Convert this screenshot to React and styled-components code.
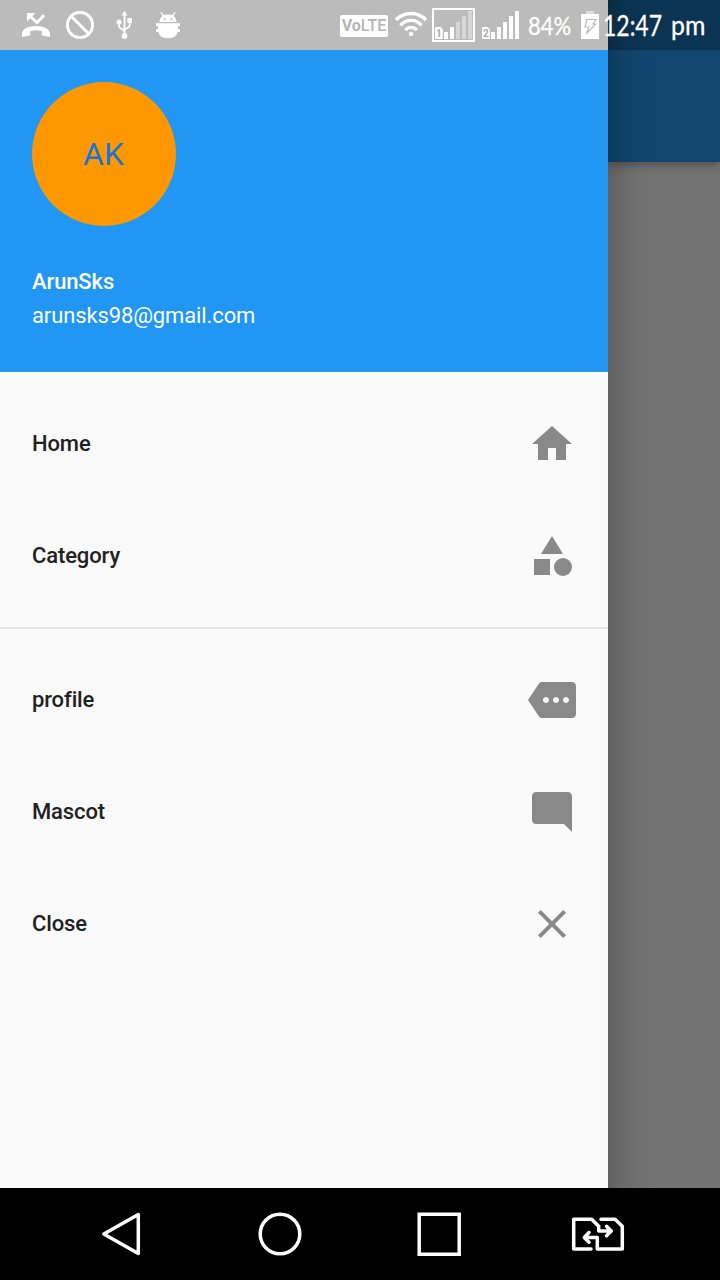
import React from 'react';
import styled, { createGlobalStyle } from 'styled-components';
import { MdHome, MdCategory, MdMore, MdModeComment, MdClose } from 'react-icons/md';

const GlobalStyle = createGlobalStyle`
  * { box-sizing: border-box; }
  body { margin: 0; font-family: Roboto, "Liberation Sans", sans-serif; }
`;

const Screen = styled.div`
  position: relative;
  width: 720px;
  height: 1280px;
  display: flex;
  flex-direction: column;
  overflow: hidden;
`;

const Main = styled.main`
  flex: 1;
  display: flex;
  min-height: 0;
`;

const Drawer = styled.aside`
  width: 608px;
  background: #fafafa;
  padding-top: 50px;
`;

const DrawerHeader = styled.header`
  height: 322px;
  padding: 32px;
  background: #2196f3;
  color: #fff;
`;

const Avatar = styled.div`
  width: 144px;
  height: 144px;
  padding-right: 1px;
  border-radius: 50%;
  background: #ff9800;
  color: #1976d2;
  font-size: 32px;
  display: flex;
  align-items: center;
  justify-content: center;
`;

const AccountText = styled.div`
  margin-top: ${(p) => p.$top}px;
  font-size: 22px;
  line-height: 34px;
  letter-spacing: -0.12px;
  font-weight: ${(p) => (p.$strong ? 500 : 400)};
`;

const Menu = styled.nav`
  padding-top: 16px;
`;

const MenuItem = styled.a`
  height: 112px;
  padding: 0 32px;
  display: flex;
  align-items: center;
  justify-content: space-between;
  color: #212121;
  font-size: 22px;
  letter-spacing: -0.12px;
  font-weight: 500;

  svg {
    width: 48px;
    height: 48px;
    color: #898989;
  }
`;

const MenuLabel = styled.span`
  padding-bottom: 2px;
`;

const Divider = styled.hr`
  height: 2px;
  margin: 15px 0;
  border: 0;
  background: #e5e5e5;
`;

const Page = styled.section`
  flex: 1;
  position: relative;
  display: flex;
  flex-direction: column;
  overflow: hidden;
  background: #737373;
`;

const PageStatus = styled.div`
  height: 50px;
  background: #0b3453;
`;

const PageAppBar = styled.div`
  height: 112px;
  background: #10466f;
  box-shadow: 0 2px 10px rgba(0, 0, 0, 0.35);
  clip-path: inset(0 0 -20px 0);
`;

const DrawerShadow = styled.div`
  position: absolute;
  inset: 0 auto 0 0;
  width: 50px;
  background: linear-gradient(to right, rgba(0, 0, 0, 0.17), rgba(0, 0, 0, 0.065) 32%, rgba(0, 0, 0, 0.02) 65%, transparent);
`;

const StatusBar = styled.div`
  position: absolute;
  inset: 0 0 auto 0;
  height: 50px;
  padding: 0 0 0 22px;
  display: flex;
  align-items: center;
  color: #fff;
  background: linear-gradient(to right, #bbb 608px, transparent 608px);

  svg { flex: none; display: block; }
`;

const StatusGroup = styled.div`
  display: flex;
  align-items: center;
  width: ${(p) => p.$width}px;
  gap: ${(p) => p.$gap}px;
`;

const VolteBadge = styled.span`
  width: 48px;
  height: 22px;
  margin: 2px 7px 0 0;
  border-radius: 2px;
  background: #fff;
  color: #b5b5b5;
  font-size: 16px;
  font-weight: 500;
  line-height: 22px;
  text-align: center;
  b { font-weight: 700; }
`;

const StatusText = styled.span`
  font-family: Lato, Roboto, sans-serif;
  font-size: ${(p) => p.$size}px;
  line-height: 50px;
  width: ${(p) => p.$width}px;
  flex: none;
  white-space: nowrap;
  -webkit-text-stroke: 0.3px currentColor;
  transform-origin: left center;
  transform: scaleX(${(p) => p.$scale});
`;

const Clock = styled.div`
  display: flex;
  padding-left: 4px;
`;

const NavBar = styled.footer`
  height: 92px;
  background: #000;
  display: flex;
  align-items: center;
  padding-left: 100px;
  svg { display: block; flex: none; }
`;

const NavButton = styled.span`
  width: ${(p) => p.$width}px;
`;

const MissedCall = () => (
  <svg width="28" height="50" viewBox="22 0 28 50" fill="currentColor">
    <path d="M27 13h8.500L27 21.500z" />
    <path d="M30.500 16.500l6.500 6.200 7-7.500" fill="none" stroke="currentColor" strokeWidth="3" />
    <path d="M22 33.500c0-4.500 6-7.500 14-7.500s14 3 14 7.500V37l-8.300-1.500v-4.300c-3.500-1.300-7.900-1.300-11.400 0v4.300L22 37z" />
  </svg>
);

const Blocked = () => (
  <svg width="28" height="50" viewBox="66 0 28 50" fill="none" stroke="currentColor" strokeWidth="3">
    <circle cx="80" cy="25" r="12.600" />
    <path d="M71 16l18 18" />
  </svg>
);

const Usb = () => (
  <svg width="28" height="50" viewBox="110 0 28 50" fill="none" stroke="currentColor" strokeWidth="1.800">
    <path d="M124.500 13v23M119 22v4.500c0 3 5.500 2 5.500 5.500M129.700 21v4.500c0 3-5.200 2-5.200 5" />
    <g fill="currentColor" stroke="none">
      <path d="M124.500 10.500l2.800 5h-5.600z" />
      <circle cx="119" cy="22" r="2.500" />
      <circle cx="124.500" cy="36" r="2.900" />
      <path d="M127.300 18h4.700v4.800h-4.700z" />
    </g>
  </svg>
);

const Bug = () => (
  <svg width="28" height="50" viewBox="154 0 28 50" fill="currentColor">
    <path d="M161 12.500l3.200 4.500M175 12.500l-3.200 4.500" stroke="currentColor" strokeWidth="1.500" />
    <path fillRule="evenodd" d="M159.500 22c.2-5 3.500-7.500 8.500-7.500s8.300 2.500 8.500 7.500zM164.500 18a1 1 0 1 0 .1 0zM171.500 18a1 1 0 1 0 .1 0z" />
    <path d="M156 23.300h24v3h-2V29h2v3h-2.300c-1 4-4.800 6.300-9.700 6.300s-8.700-2.300-9.700-6.300H156v-3h2v-2.700h-2z" />
  </svg>
);

const Wifi = () => (
  <svg width="32" height="50" viewBox="395 0 32 50" fill="none" stroke="currentColor" strokeWidth="3.400">
    <path d="M396 20a20.600 20.600 0 0 1 30 0M400.500 25.300a13.700 13.700 0 0 1 21 0M405.300 30.200a7.200 7.200 0 0 1 11.400 0" />
    <circle cx="411" cy="34" r="2.200" fill="currentColor" stroke="none" />
  </svg>
);

const SimLabel = styled.text`
  font: 700 10px Roboto, sans-serif;
  fill: #aaa;
`;

const BAR_HEIGHTS = [7, 12, 17, 23, 28];

const Signal = ({ sim, active, boxed }) => (
  <svg width="43" height="50" viewBox="0 0 43 50" fill="currentColor">
    {boxed && <rect x="1" y="9" width="41" height="32" fill="none" stroke="currentColor" strokeWidth="2" />}
    <path d="M3 27h5.500l2.300 2.500V39H3z" />
    <SimLabel x="4" y="37">{sim}</SimLabel>
    {BAR_HEIGHTS.map((h, i) => (
      <rect key={h} x={12 + i * 6} y={39 - h} width="4" height={h} opacity={i < active ? 1 : 0.4} />
    ))}
  </svg>
);

const Battery = () => (
  <svg width="18" height="50" viewBox="581 0 18 50">
    <path d="M586 11h8v3h-8z" fill="#ddd" />
    <path d="M581 14h18v25h-18z" fill="#fff" />
    <path d="M587 19.500h9l-3 4.500h2.800l-9.300 9.500 2.300-6.500H585z" fill="none" stroke="#bbb" strokeWidth="1.200" />
  </svg>
);

const NavIcon = ({ left, width, children }) => (
  <svg width={width} height="92" viewBox={`${left} 1188 ${width} 92`} fill="none" stroke="#fff" strokeWidth="3.500" strokeLinejoin="round" strokeLinecap="round">
    {children}
  </svg>
);

const PRIMARY = [
  { label: 'Home', Icon: MdHome },
  { label: 'Category', Icon: MdCategory },
];

const SECONDARY = [
  { label: 'profile', Icon: MdMore },
  { label: 'Mascot', Icon: MdModeComment },
  { label: 'Close', Icon: MdClose },
];

const renderItem = ({ label, Icon }) => (
  <MenuItem key={label}>
    <MenuLabel>{label}</MenuLabel>
    <Icon />
  </MenuItem>
);

export default function App() {
  return (
    <Screen>
      <GlobalStyle />
      <Main>
        <Drawer>
          <DrawerHeader>
            <Avatar>AK</Avatar>
            <AccountText $strong $top={39}>ArunSks</AccountText>
            <AccountText $top={0}>arunsks98@gmail.com</AccountText>
          </DrawerHeader>
          <Menu>
            {PRIMARY.map(renderItem)}
            <Divider />
            {SECONDARY.map(renderItem)}
          </Menu>
        </Drawer>
        <Page>
          <PageStatus />
          <PageAppBar />
          <DrawerShadow />
        </Page>
      </Main>
      <NavBar>
        <NavButton $width={156}>
          <NavIcon left={100} width={44}><path d="M138.300 1214.500v39L103.800 1234z" /></NavIcon>
        </NavButton>
        <NavButton $width={158}>
          <NavIcon left={256} width={48}><circle cx="280" cy="1234" r="19.800" /></NavIcon>
        </NavButton>
        <NavButton $width={156}>
          <NavIcon left={414} width={50}><path d="M419.200 1214.200h40v40h-40z" strokeLinejoin="miter" /></NavIcon>
        </NavButton>
        <NavButton $width={56}>
          <NavIcon left={570} width={56}>
            <path d="M591 1249h-17.300v-29.800h18l7 7v4.800h12.500M606.500 1226.300l4.800 4.700-4.800 4.700" />
            <path d="M601 1219.200h14l7.300 7V1249h-25v-11.500H584.500M589 1232.500l-4.800 5 4.800 4.700" />
          </NavIcon>
        </NavButton>
      </NavBar>
      <StatusBar>
        <StatusGroup $width={318} $gap={16}>
          <MissedCall />
          <Blocked />
          <Usb />
          <Bug />
        </StatusGroup>
        <VolteBadge><b>Vo</b>LTE</VolteBadge>
        <StatusGroup $width={133} $gap={4.5}>
          <Wifi />
          <Signal sim="1" active={2} boxed />
          <Signal sim="2" active={5} />
        </StatusGroup>
        <StatusText $size={25} $width={53} $scale={0.88}>84%</StatusText>
        <Battery />
        <Clock>
          <StatusText $size={28} $width={68} $scale={0.82}>12:47</StatusText>
          <StatusText $size={27} $width={40} $scale={0.92}>pm</StatusText>
        </Clock>
      </StatusBar>
    </Screen>
  );
}
